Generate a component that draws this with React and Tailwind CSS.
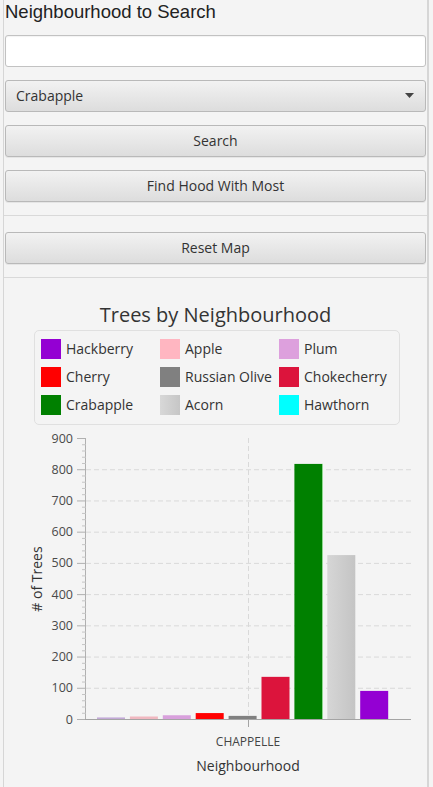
import React from "react";

const legend = [
    { name: "Hackberry", color: "#9400d3" },
    { name: "Apple", color: "#ffb6c1" },
    { name: "Plum", color: "#dda0dd" },
    { name: "Cherry", color: "#ff0000" },
    { name: "Russian Olive", color: "#808080" },
    { name: "Chokecherry", color: "#dc143c" },
    { name: "Crabapple", color: "#008000" },
    { name: "Acorn", color: "linear-gradient(to right, #d8d8d8, #c6c6c6)" },
    { name: "Hawthorn", color: "#00ffff" },
];

// bars for CHAPPELLE, left to right
const bars = [
    { value: 5, color: "#c2a9d6" },
    { value: 8, color: "#f0b8c0" },
    { value: 12, color: "#d8a0dc" },
    { value: 19, color: "#ff0000" },
    { value: 10, color: "#808080" },
    { value: 135, color: "#dc143c" },
    { value: 817, color: "#008000" },
    { value: 525, color: "url(#acorn)" },
    { value: 90, color: "#9400d3" },
];

const Button = ({ children }) => (
    <button
        type="button"
        className="h-[32px] w-full rounded-[3px] border border-[#b9b9b9] bg-gradient-to-b from-[#f2f2f2] to-[#dddddd] pb-[2px] text-[14px] text-[#333] shadow-[0_1px_0_rgba(0,0,0,0.06)]"
    >
        {children}
    </button>
);

const Chart = () => {
    // svg origin sits at page y = 425
    const top = 438 - 425;
    const base = 719 - 425;
    const per = (base - top) / 900;
    const majors = [0, 100, 200, 300, 400, 500, 600, 700, 800, 900];
    const minors = [];
    for (let v = 20; v < 900; v += 20) if (v % 100 !== 0) minors.push(v);

    return (
        <svg width="423" height="362" className="block" style={{ marginLeft: -4 }}>
            <defs>
                <linearGradient id="acorn" x1="0" x2="1" y1="0" y2="0">
                    <stop offset="0" stopColor="#d6d6d6" />
                    <stop offset="1" stopColor="#c4c4c4" />
                </linearGradient>
            </defs>
            {/* grid */}
            {majors.slice(1, 9).map((v) => (
                <line
                    key={"g" + v}
                    x1="86"
                    x2="411"
                    y1={base - v * per + 0.5}
                    y2={base - v * per + 0.5}
                    stroke="#d9d9d9"
                    strokeDasharray="5 3"
                />
            ))}
            <line x1="248.5" x2="248.5" y1={top} y2={base} stroke="#d9d9d9" strokeDasharray="5 3" />

            {/* bars */}
            {bars.map((b, i) => {
                const h = b.value * per;
                const x = 97 + i * 32.9;
                return (
                    <rect key={i} x={x} y={base - h} width="28" height={h} fill={b.color} />
                );
            })}
            <rect x="322" y={base - 817 * per} width="1" height={817 * per} fill="#8fd88f" />

            {/* y axis */}
            <line x1="85.5" x2="85.5" y1={top} y2={base} stroke="#b0b0b0" />
            {majors.map((v) => (
                <g key={"t" + v}>
                    <line x1="77" x2="86" y1={base - v * per + 0.5} y2={base - v * per + 0.5} stroke="#b0b0b0" />
                    <text
                        x="73"
                        y={base - v * per + 4.5}
                        textAnchor="end"
                        fontSize="12.5"
                        fill="#4a4a4a"
                        fontFamily="'Open Sans', sans-serif"
                    >
                        {v}
                    </text>
                </g>
            ))}
            {minors.map((v) => (
                <line key={"m" + v} x1="82" x2="86" y1={base - v * per + 0.5} y2={base - v * per + 0.5} stroke="#c4c4c4" />
            ))}

            {/* x axis */}
            <line x1="85" x2="411" y1={base + 0.5} y2={base + 0.5} stroke="#a4a4a4" />
            <line x1="248.5" x2="248.5" y1={base} y2={base + 8} stroke="#a4a4a4" />
            <text x="248" y="321" textAnchor="middle" fontSize="12" fill="#444" fontFamily="'Open Sans', sans-serif">
                CHAPPELLE
            </text>
            <text x="248" y="346" textAnchor="middle" fontSize="14" fill="#333" fontFamily="'Open Sans', sans-serif">
                Neighbourhood
            </text>
            <text
                x="0"
                y="0"
                textAnchor="middle"
                fontSize="14"
                fill="#333"
                fontFamily="'Open Sans', sans-serif"
                transform="translate(42 154) rotate(-90)"
            >
                # of Trees
            </text>
        </svg>
    );
};

export default function App() {
    return (
        <div className="h-[787px] w-[433px] overflow-hidden bg-[#f4f4f4] font-['Open_Sans',sans-serif] text-[#333]">
            <div className="ml-[3px] h-full w-[426px] border-l border-r-2 border-[#d6d6d6]">
                <div className="px-[1px]">
                    <div className="h-[24px] font-['Liberation_Sans',Arial,sans-serif] text-[18.5px] leading-[24px] text-[#222]">
                        Neighbourhood to Search
                    </div>
                    <input
                        type="text"
                        className="mt-[11px] block h-[32px] w-full rounded-[3px] border border-[#c2c2c2] bg-white px-2 shadow-[inset_0_1px_1px_rgba(0,0,0,0.05)] outline-none"
                    />
                    <div className="mt-[13px] flex h-[32px] w-full items-center justify-between rounded-[3px] border border-[#b9b9b9] bg-gradient-to-b from-[#f2f2f2] to-[#dddddd] pb-[2px] pl-[10px] pr-[11px] text-[14px]">
                        <span>Crabapple</span>
                        <svg width="9" height="5" viewBox="0 0 9 5">
                            <path d="M0 0 L9 0 L4.5 5 Z" fill="#444" />
                        </svg>
                    </div>
                    <div className="mt-[13px]">
                        <Button>Search</Button>
                    </div>
                    <div className="mt-[13px]">
                        <Button>Find Hood With Most</Button>
                    </div>
                </div>
                <div className="mt-[13px] h-px bg-[#d9d9d9]" />
                <div className="mt-[16px] px-[1px]">
                    <Button>Reset Map</Button>
                </div>
                <div className="mt-[13px] h-px bg-[#d9d9d9]" />

                <div className="mt-[23px] text-center text-[20px] leading-[28px] text-[#333]">
                    Trees by Neighbourhood
                </div>
                <div className="ml-[30px] mt-[1px] w-[366px] rounded-[5px] border border-[#e0e0e0] pb-[9px] pl-[6px] pt-[8px]">
                    <div className="grid grid-cols-[119px_119px_auto] gap-y-[8px]">
                        {legend.map((l) => (
                            <div key={l.name} className="flex h-[20px] items-center gap-[5px]">
                                <span className="h-[20px] w-[20px] shrink-0" style={{ background: l.color }} />
                                <span className="whitespace-nowrap text-[14px] leading-[20px]">{l.name}</span>
                            </div>
                        ))}
                    </div>
                </div>
                <Chart />
            </div>
        </div>
    );
}
